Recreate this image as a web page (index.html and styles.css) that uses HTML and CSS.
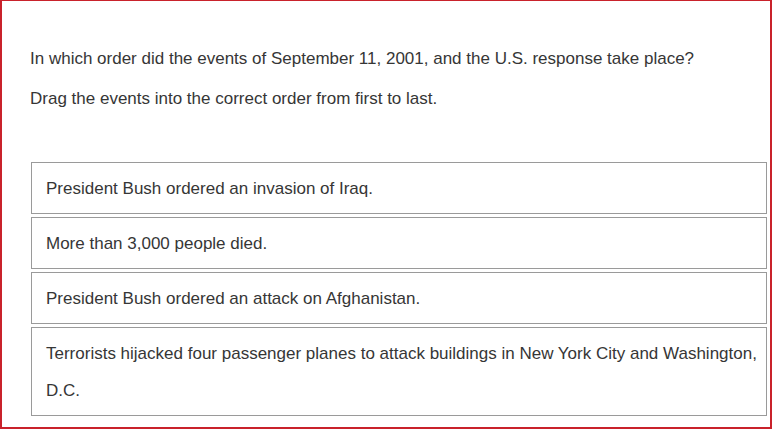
FILE: index.html
```html
<!DOCTYPE html>
<html>
<head>
<meta charset="utf-8">
<link rel="stylesheet" href="styles.css">
</head>
<body>
<div class="frame">
  <p class="prompt">In which order did the events of September 11, 2001, and the U.S. response take place?</p>
  <p class="prompt">Drag the events into the correct order from first to last.</p>
  <ul class="items">
    <li class="item">President Bush ordered an invasion of Iraq.</li>
    <li class="item">More than 3,000 people died.</li>
    <li class="item">President Bush ordered an attack on Afghanistan.</li>
    <li class="item">Terrorists hijacked four passenger planes to attack buildings in New York City and Washington, D.C.</li>
  </ul>
</div>
</body>
</html>
```
FILE: styles.css
```css
html, body {
  margin: 0;
  padding: 0;
  background: #fff;
}
.frame {
  box-sizing: border-box;
  width: 772px;
  height: 429px;
  border: 2px solid #c9222b;
  border-top-width: 1px;
  padding: 48px 3px 0 28px;
  font-family: "Liberation Sans", Arial, sans-serif;
  font-size: 17px;
  color: #363636;
  overflow: hidden;
}
.prompt {
  margin: 0 0 20px 0;
  line-height: 20px;
}
.items {
  list-style: none;
  margin: 53px 0 0 1px;
  padding: 0;
  display: flex;
  flex-direction: column;
  gap: 3px;
}
.item {
  border: 1px solid #9a9a9a;
  padding: 7px 4px 6px 14px;
  line-height: 37px;
}
```
